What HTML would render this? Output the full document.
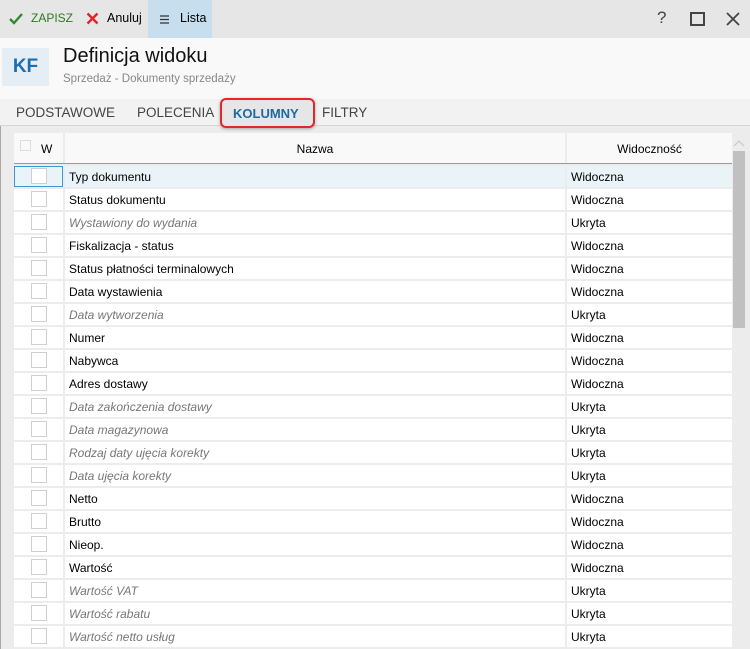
<!DOCTYPE html>
<html><head><meta charset="utf-8"><style>
*{margin:0;padding:0;box-sizing:border-box}
body{width:750px;height:649px;overflow:hidden;background:#ececec;font-family:"Segoe UI","Liberation Sans","DejaVu Sans",sans-serif;position:relative;font-size:12px;color:#000}
.a{position:absolute}
.tb{left:0;top:0;width:750px;height:38px;background:#e6e6e6}
.hd{left:0;top:38px;width:750px;height:61px;background:#f9f9f9}
.tabs{left:0;top:99px;width:750px;height:27px;background:#f2f2f2;border-bottom:1px solid #d6d6d6}
.tab{position:absolute;top:105px;font-size:13.5px;color:#444;letter-spacing:0}
.row{position:absolute;left:14px;height:21px;width:718px}
.c1{position:absolute;left:0;top:0;width:49px;height:21px;background:#fff}
.c2{position:absolute;left:51px;top:0;width:500px;height:21px;background:#fff;padding-left:4px;line-height:23px}
.c3{position:absolute;left:553px;top:0;width:165px;height:21px;background:#fff;padding-left:4px;line-height:23px}
.cb{position:absolute;left:17px;top:2px;width:16px;height:16px;border:1px solid #cfcfcf;background:#fff}
.i{font-style:italic;color:#777}
</style></head><body>
<div class="a" style="left:0;top:38px;width:1px;height:611px;background:#a8a8a8"></div>
<div class="a tb"></div>
<div class="a" style="left:148px;top:0;width:64px;height:38px;background:#c7deee"></div>
<svg class="a" style="left:8px;top:12px" width="16" height="14"><path d="M2 7l4 4 8-9" stroke="#2e8b2e" stroke-width="2.4" fill="none"/></svg>
<div class="a" style="left:31px;top:11px;font-size:12px;color:#2d7a1e">ZAPISZ</div>
<svg class="a" style="left:86px;top:12px" width="13" height="13"><path d="M1.5 1.5l10 10M11.5 1.5l-10 10" stroke="#e0242b" stroke-width="2.4"/></svg>
<div class="a" style="left:107px;top:11px;font-size:12.5px">Anuluj</div>
<svg class="a" style="left:160px;top:15px" width="9" height="9"><path d="M0 1h9M0 4.5h9M0 8h9" stroke="#333" stroke-width="1.2"/></svg>
<div class="a" style="left:180px;top:11px;font-size:12.5px">Lista</div>
<div class="a" style="left:657px;top:8px;font-size:17px;color:#444">?</div>
<div class="a" style="left:690px;top:12px;width:15px;height:14px;border:2px solid #444"></div>
<svg class="a" style="left:726px;top:12px" width="14" height="14"><path d="M1 1l12 12M13 1l-12 12" stroke="#444" stroke-width="1.8"/></svg>
<div class="a hd"></div>
<div class="a" style="left:2px;top:48px;width:47px;height:38px;background:#e6eef5;color:#1b6fb0;font-weight:bold;font-size:19px;line-height:38px;text-align:center">KF</div>
<div class="a" style="left:63px;top:45px;font-size:20px;color:#111">Definicja widoku</div>
<div class="a" style="left:63px;top:73px;font-size:11.5px;color:#888">Sprzedaż - Dokumenty sprzedaży</div>
<div class="a tabs"></div>
<div class="tab" style="left:16px">PODSTAWOWE</div>
<div class="tab" style="left:137px">POLECENIA</div>
<div class="a" style="left:220px;top:98px;width:95px;height:30px;border:2px solid #e2262c;border-radius:6px;background:#e6e6e6;box-shadow:0 1px 3px rgba(0,0,0,.3)"></div>
<div class="tab" style="left:233px;color:#1c6aa3;font-weight:bold;font-size:13px;top:106px">KOLUMNY</div>
<div class="tab" style="left:322px">FILTRY</div>
<div class="a" style="left:14px;top:133px;width:49px;height:30px;background:#f9f9f9"></div>
<div class="a" style="left:20px;top:140px;width:11px;height:11px;border:1px solid #ddd"></div>
<div class="a" style="left:41px;top:142px;font-size:12px">W</div>
<div class="a" style="left:65px;top:133px;width:500px;height:30px;background:#f9f9f9;text-align:center;line-height:32px">Nazwa</div>
<div class="a" style="left:567px;top:133px;width:165px;height:30px;background:#f9f9f9;text-align:center;line-height:32px">Widoczność</div>
<div class="a" style="left:14px;top:163px;width:718px;height:1px;background:#999"></div>
<svg class="a" style="left:733px;top:139px" width="12" height="8"><path d="M1 7l5-5 5 5" stroke="#ccc" stroke-width="1.3" fill="none"/></svg>
<div class="a" style="left:733px;top:151px;width:12px;height:177px;background:#c0c0c0"></div>
<div id="g"></div>
<script>
var r=[["Typ dokumentu",1],["Status dokumentu",1],["Wystawiony do wydania",0],["Fiskalizacja - status",1],["Status płatności terminalowych",1],["Data wystawienia",1],["Data wytworzenia",0],["Numer",1],["Nabywca",1],["Adres dostawy",1],["Data zakończenia dostawy",0],["Data magazynowa",0],["Rodzaj daty ujęcia korekty",0],["Data ujęcia korekty",0],["Netto",1],["Brutto",1],["Nieop.",1],["Wartość",1],["Wartość VAT",0],["Wartość rabatu",0],["Wartość netto usług",0]];
var h="";r.forEach(function(x,i){var t=166+23*i;var bg=i==0?"#eaf4f8":"#fff";
h+='<div class="row" style="top:'+t+'px"><div class="c1" style="background:'+bg+(i==0?';border:1px solid #3a9ad9':'')+'"><div class="cb" style="'+(i==0?'left:16px;top:1px':'')+'"></div></div><div class="c2'+(x[1]?'':' i')+'" style="background:'+bg+'">'+x[0]+'</div><div class="c3" style="background:'+bg+'">'+(x[1]?'Widoczna':'Ukryta')+'</div></div>';});
document.getElementById("g").innerHTML=h;
</script>
</body></html>
